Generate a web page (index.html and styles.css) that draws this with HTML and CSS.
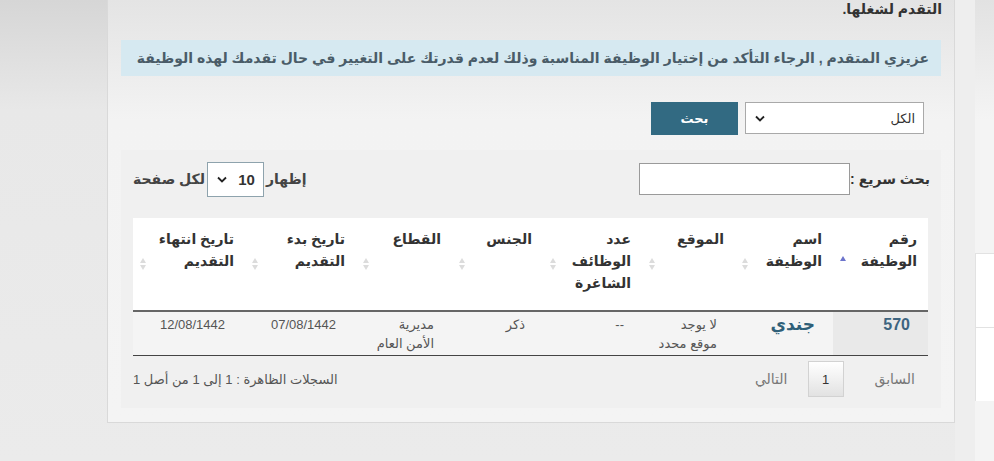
FILE: index.html
```html
<!DOCTYPE html>
<html lang="ar" dir="rtl">
<head>
    <meta charset="UTF-8">
    <meta name="viewport" content="width=device-width, initial-scale=1.0">
    <title>الوظائف المتاحة</title>
    <link rel="stylesheet" href="styles.css">
</head>
<body>
    <div class="page">
        <aside class="sidebar">
            <div class="side-box"></div>
            <div class="side-box"></div>
        </aside>

        <main class="panel">
            <p class="intro">التقدم لشغلها.</p>

            <div class="alert">عزيزي المتقدم , الرجاء التأكد من إختيار الوظيفة المناسبة وذلك لعدم قدرتك على التغيير في حال تقدمك لهذه الوظيفة</div>

            <div class="search-row">
                <div class="select-box wide">
                    <span>الكل</span>
                    <svg class="chevron" width="10" height="7" viewBox="0 0 10 7"><path d="M1 1.5 L5 5.5 L9 1.5" fill="none" stroke="#222" stroke-width="1.8"/></svg>
                </div>
                <button class="btn" type="button">بحث</button>
            </div>

            <div class="dt-wrapper">
                <div class="dt-top">
                    <label class="dt-filter">
                        بحث سريع :
                        <input type="text">
                    </label>
                    <div class="dt-length">
                        إظهار
                        <div class="select-box small">
                            <span>10</span>
                            <svg class="chevron" width="10" height="7" viewBox="0 0 10 7"><path d="M1 1.5 L5 5.5 L9 1.5" fill="none" stroke="#222" stroke-width="1.8"/></svg>
                        </div>
                        لكل صفحة
                    </div>
                </div>

                <table class="jobs">
                    <colgroup>
                        <col style="width:95px">
                        <col style="width:98px">
                        <col style="width:93px">
                        <col style="width:99px">
                        <col style="width:91px">
                        <col style="width:96px">
                        <col style="width:111px">
                        <col style="width:112px">
                    </colgroup>
                    <thead>
                        <tr>
                            <th>رقم<br>الوظيفة<span class="sort asc"></span></th>
                            <th>اسم<br>الوظيفة<span class="sort"></span></th>
                            <th>الموقع<span class="sort"></span></th>
                            <th>عدد<br>الوظائف<br>الشاغرة<span class="sort"></span></th>
                            <th>الجنس<span class="sort"></span></th>
                            <th>القطاع<span class="sort"></span></th>
                            <th>تاريخ بدء<br>التقديم<span class="sort"></span></th>
                            <th>تاريخ انتهاء<br>التقديم<span class="sort"></span></th>
                        </tr>
                    </thead>
                    <tbody>
                        <tr>
                            <td class="job-id">570</td>
                            <td class="job-name">جندي</td>
                            <td>لا يوجد<br>موقع محدد</td>
                            <td>--</td>
                            <td>ذكر</td>
                            <td>مديرية<br>الأمن العام</td>
                            <td class="date">07/08/1442</td>
                            <td class="date">12/08/1442</td>
                        </tr>
                    </tbody>
                </table>

                <div class="dt-bottom">
                    <div class="paging">
                        <span class="page-link prev">السابق</span>
                        <span class="page-btn">1</span>
                        <span class="page-link next">التالي</span>
                    </div>
                    <div class="dt-info">السجلات الظاهرة : 1 إلى 1 من أصل 1</div>
                </div>
            </div>
        </main>
    </div>
</body>
</html>
```

FILE: styles.css
```css
html, body {
    margin: 0;
    height: 100%;
}

body {
    font-family: "Liberation Sans", "DejaVu Sans", sans-serif;
    color: #333;
    background: linear-gradient(#d6d6d6 0, #e8e8e8 110px, #ebebeb 100%);
    overflow: hidden;
}

.page {
    display: flex;
    align-items: flex-start;
    height: 100%;
}

/* right column, cut by the window edge */
.sidebar {
    width: 39px;
    height: 100%;
    flex-shrink: 0;
    box-sizing: border-box;
    padding-top: 253px;
    border-left: 20px solid #eeeeee;
    background: linear-gradient(#e2e2e2 0, #f4f4f4 120px);
}

.side-box {
    height: 73px;
    background: #ffffff;
    border-top: 1px solid #e2e2e2;
    border-left: 1px solid #e2e2e2;
}

.panel {
    width: 820px;
    padding: 0 13px 14px;
    background: linear-gradient(#e4e4e4 0, #f3f3f3 120px, #f4f4f4 100%);
    border: 1px solid #d9d9d9;
    border-top: none;
}

.intro {
    margin: -2px -1px 20px 0;
    font-size: 14px;
    font-weight: bold;
    line-height: 22px;
    color: #333;
}

.alert {
    height: 36px;
    line-height: 36px;
    padding: 0 12px;
    background: #d6e9f1;
    color: #4a5c68;
    font-size: 14px;
    font-weight: bold;
    white-space: nowrap;
}

.search-row {
    display: flex;
    gap: 7px;
    margin: 26px 17px 0 0;
}

.select-box {
    display: flex;
    align-items: center;
    justify-content: space-between;
    box-sizing: border-box;
    background: #fff;
    border: 1px solid #a9a9a9;
    font-size: 13px;
    color: #333;
}

.select-box.wide {
    width: 179px;
    height: 32px;
    padding: 0 8px 0 9px;
}

.select-box.small {
    width: 57px;
    height: 35px;
    padding: 0 8px 0 9px;
    border-color: #8ea3ad;
    font-size: 15px;
    font-weight: bold;
}

.btn {
    width: 87px;
    height: 33px;
    border: none;
    background: #326a82;
    color: #fff;
    font-family: inherit;
    font-size: 13px;
    font-weight: bold;
}

.dt-wrapper {
    margin-top: 15px;
    padding: 11px 13px 11px 12px;
    background: #f0f0f0;
}

.dt-top {
    display: flex;
    justify-content: space-between;
    align-items: center;
    height: 36px;
    margin-right: -2px;
}

.dt-filter {
    display: flex;
    align-items: center;
    font-size: 14px;
    font-weight: bold;
}

.dt-filter input {
    width: 211px;
    height: 32px;
    box-sizing: border-box;
    border: 1px solid #9a9a9a;
    background: #fff;
    margin: 0;
}

.dt-length {
    display: flex;
    align-items: center;
    gap: 3px;
    font-size: 14px;
    font-weight: bold;
    color: #444;
}

.dt-length .select-box {
    margin-left: -1px;
    margin-right: -1px;
}

.jobs {
    width: 795px;
    margin-top: 21px;
    border-collapse: collapse;
    table-layout: fixed;
    border-bottom: 1px solid #444;
}

.jobs th {
    position: relative;
    height: 92px;
    box-sizing: border-box;
    padding: 10px 11px 16px 24px;
    vertical-align: top;
    text-align: right;
    background: #fff;
    border-bottom: 2px solid #666;
    font-size: 14px;
    line-height: 22px;
    white-space: nowrap;
    color: #333;
}

/* datatables sort arrows */
.sort {
    position: absolute;
    left: 7px;
    top: 40px;
    width: 7px;
    height: 12px;
}

.sort::before,
.sort::after {
    content: "";
    position: absolute;
    left: 0;
    border-left: 3.5px solid transparent;
    border-right: 3.5px solid transparent;
}

.sort::before {
    top: 0;
    border-bottom: 5px solid #dcdcdc;
}

.sort::after {
    bottom: 0;
    border-top: 5px solid #dcdcdc;
}

.sort.asc {
    top: 38px;
}

.sort.asc::before {
    border-bottom-color: #6c74cc;
}

.sort.asc::after {
    display: none;
}

.jobs td {
    padding: 3px 18px 2px 8px;
    vertical-align: top;
    text-align: right;
    font-size: 13px;
    line-height: 19px;
    color: #555;
    background: #f4f4f4;
    white-space: nowrap;
}

.jobs td.job-id {
    background: #e9e9e9;
    font-size: 16px;
    font-weight: bold;
    color: #3d6480;
}

.jobs td.job-name {
    font-size: 17px;
    font-weight: bold;
    color: #2f5f78;
}

.jobs td.date {
    padding-right: 20px;
}

.dt-bottom {
    display: flex;
    justify-content: space-between;
    align-items: center;
    margin-top: 5px;
}

.paging {
    display: flex;
    align-items: center;
    font-size: 14px;
    color: #777;
}

.page-link.prev {
    margin-right: 13px;
    margin-left: 31px;
}

.page-link.next {
    margin-right: 20px;
}

.page-btn {
    width: 36px;
    height: 36px;
    box-sizing: border-box;
    display: flex;
    align-items: center;
    justify-content: center;
    border: 1px solid #d2d2d2;
    background: linear-gradient(#ffffff, #e2e2e2);
    color: #333;
    font-size: 13px;
}

.dt-info {
    font-size: 13px;
    color: #555;
}
```
